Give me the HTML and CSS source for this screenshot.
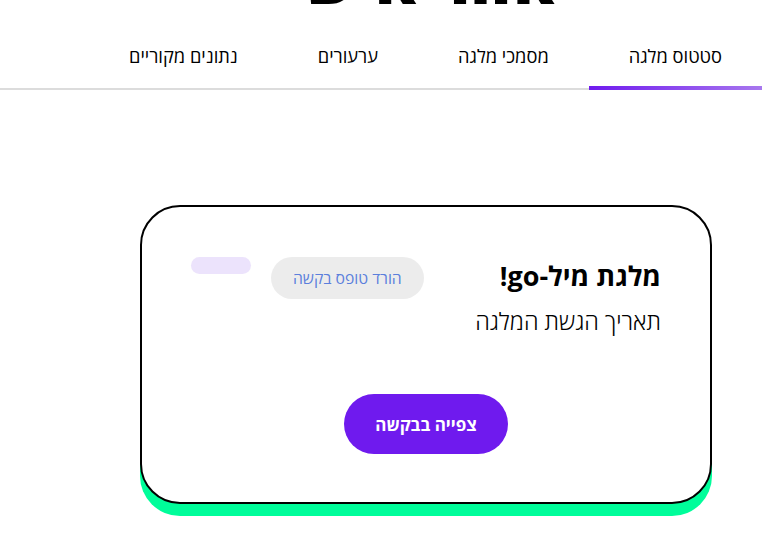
FILE: index.html
```html
<!DOCTYPE html>
<html lang="he" dir="rtl">
<head>
<meta charset="utf-8">
<link rel="stylesheet" href="styles.css">
</head>
<body>
<header class="page-head">
  <h1 class="page-title">אזור אישי</h1>
</header>
<nav class="tabs">
  <a class="tab active">סטטוס מלגה</a>
  <a class="tab">מסמכי מלגה</a>
  <a class="tab">ערעורים</a>
  <a class="tab">נתונים מקוריים</a>
</nav>
<main class="content">
  <section class="card">
    <div class="card-top">
      <div class="card-text">
        <h2 class="card-title">מלגת מיל-go!</h2>
        <p class="card-sub">תאריך הגשת המלגה</p>
      </div>
      <div class="card-pills">
        <span class="pill-download">הורד טופס בקשה</span>
        <span class="pill-status"></span>
      </div>
    </div>
    <div class="card-actions">
      <button class="btn-view">צפייה בבקשה</button>
    </div>
  </section>
</main>
</body>
</html>
```
FILE: styles.css
```css
* { box-sizing: border-box; }
html, body { margin: 0; padding: 0; background: #fff; }
body {
  direction: rtl;
  font-family: "Open Sans", "DejaVu Sans", sans-serif;
  color: #000;
}
.page-head { height: 10px; overflow: hidden; display: flex; justify-content: center; padding-left: 80px; }
.page-title {
  margin: -52px 0 0;
  font-size: 64px;
  line-height: 1;
  font-weight: 800;
}
.tabs {
  display: flex;
  margin-top: 24px;
  border-bottom: 2px solid #dcdcdc;
}
.tab {
  display: block;
  padding: 10px 40px 18px;
  font-size: 18.3px;
  line-height: 24px;
  color: #000;
  margin-bottom: -2px;
  border-bottom: 4px solid transparent;
}
.tab.active {
  border-image: linear-gradient(to left, #a878ee, #6f1aee) 1;
}
.content { padding: 115px 50px 40px 140px; }
.card {
  border: 2px solid #000;
  border-radius: 40px;
  box-shadow: 0 12px 0 #00fd9a;
  padding: 50px 49px 48px;
  background: #fff;
}
.card-top { display: flex; justify-content: space-between; align-items: flex-start; }
.card-title { margin: 0; font-size: 27px; line-height: 38px; font-weight: 700; }
.card-sub { margin: 10px 0 0; font-size: 23.5px; line-height: 32px; font-weight: 300; }
.card-pills { display: flex; gap: 20px; align-items: flex-start; }
.pill-download {
  background: #ececec;
  color: #5b7fdc;
  font-size: 15.7px;
  line-height: 42px;
  height: 42px;
  padding: 0 22px;
  border-radius: 21px;
}
.pill-status {
  width: 60px;
  height: 17px;
  border-radius: 9px;
  background: #ece3fc;
}
.card-actions { display: flex; justify-content: center; margin-top: 57px; }
.btn-view {
  font-family: inherit;
  background: #6f1aee;
  color: #fff;
  border: 0;
  height: 60px;
  padding: 0 31px;
  border-radius: 30px;
  font-size: 17px;
  font-weight: 700;
}
```
